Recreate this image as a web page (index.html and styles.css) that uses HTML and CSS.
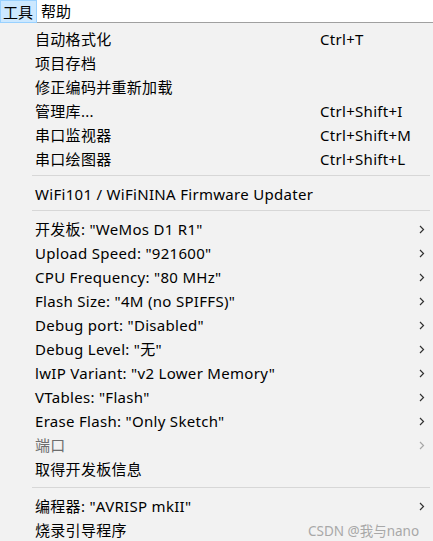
FILE: index.html
```html
<!DOCTYPE html>
<html lang="zh-CN">
<head>
<meta charset="utf-8">
<title>工具菜单</title>
<link rel="stylesheet" href="styles.css">
</head>
<body>
<div class="menubar">
  <span class="top-item active">工具</span>
  <span class="top-item">帮助</span>
</div>
<div class="menu">
  <div class="row"><span class="label">自动格式化</span><span class="key">Ctrl+T</span></div>
  <div class="row"><span class="label">项目存档</span></div>
  <div class="row"><span class="label">修正编码并重新加载</span></div>
  <div class="row"><span class="label">管理库...</span><span class="key">Ctrl+Shift+I</span></div>
  <div class="row"><span class="label">串口监视器</span><span class="key">Ctrl+Shift+M</span></div>
  <div class="row"><span class="label">串口绘图器</span><span class="key">Ctrl+Shift+L</span></div>
  <div class="sep"></div>
  <div class="row"><span class="label">WiFi101 / WiFiNINA Firmware Updater</span></div>
  <div class="sep"></div>
  <div class="row"><span class="label">开发板: "WeMos D1 R1"</span><span class="arrow"><svg width="6" height="9" viewBox="0 0 6 9"><path d="M1 1 L4.5 4.5 L1 8" fill="none" stroke="currentColor" stroke-width="1.2"/></svg></span></div>
  <div class="row"><span class="label">Upload Speed: "921600"</span><span class="arrow"><svg width="6" height="9" viewBox="0 0 6 9"><path d="M1 1 L4.5 4.5 L1 8" fill="none" stroke="currentColor" stroke-width="1.2"/></svg></span></div>
  <div class="row"><span class="label">CPU Frequency: "80 MHz"</span><span class="arrow"><svg width="6" height="9" viewBox="0 0 6 9"><path d="M1 1 L4.5 4.5 L1 8" fill="none" stroke="currentColor" stroke-width="1.2"/></svg></span></div>
  <div class="row"><span class="label">Flash Size: "4M (no SPIFFS)"</span><span class="arrow"><svg width="6" height="9" viewBox="0 0 6 9"><path d="M1 1 L4.5 4.5 L1 8" fill="none" stroke="currentColor" stroke-width="1.2"/></svg></span></div>
  <div class="row"><span class="label">Debug port: "Disabled"</span><span class="arrow"><svg width="6" height="9" viewBox="0 0 6 9"><path d="M1 1 L4.5 4.5 L1 8" fill="none" stroke="currentColor" stroke-width="1.2"/></svg></span></div>
  <div class="row"><span class="label">Debug Level: "无"</span><span class="arrow"><svg width="6" height="9" viewBox="0 0 6 9"><path d="M1 1 L4.5 4.5 L1 8" fill="none" stroke="currentColor" stroke-width="1.2"/></svg></span></div>
  <div class="row"><span class="label">lwIP Variant: "v2 Lower Memory"</span><span class="arrow"><svg width="6" height="9" viewBox="0 0 6 9"><path d="M1 1 L4.5 4.5 L1 8" fill="none" stroke="currentColor" stroke-width="1.2"/></svg></span></div>
  <div class="row"><span class="label">VTables: "Flash"</span><span class="arrow"><svg width="6" height="9" viewBox="0 0 6 9"><path d="M1 1 L4.5 4.5 L1 8" fill="none" stroke="currentColor" stroke-width="1.2"/></svg></span></div>
  <div class="row"><span class="label">Erase Flash: "Only Sketch"</span><span class="arrow"><svg width="6" height="9" viewBox="0 0 6 9"><path d="M1 1 L4.5 4.5 L1 8" fill="none" stroke="currentColor" stroke-width="1.2"/></svg></span></div>
  <div class="row disabled"><span class="label">端口</span><span class="arrow"><svg width="6" height="9" viewBox="0 0 6 9"><path d="M1 1 L4.5 4.5 L1 8" fill="none" stroke="currentColor" stroke-width="1.2"/></svg></span></div>
  <div class="row"><span class="label">取得开发板信息</span></div>
  <div class="sep sep-last"></div>
  <div class="row"><span class="label">编程器: "AVRISP mkII"</span><span class="arrow"><svg width="6" height="9" viewBox="0 0 6 9"><path d="M1 1 L4.5 4.5 L1 8" fill="none" stroke="currentColor" stroke-width="1.2"/></svg></span></div>
  <div class="row"><span class="label">烧录引导程序</span></div>
</div>
<div class="watermark">CSDN @我与nano</div>
</body>
</html>
```
FILE: styles.css
```css
html, body {
  margin: 0;
  padding: 0;
  background: #f2f2f2;
  overflow: hidden;
}
body {
  width: 433px;
  height: 541px;
  position: relative;
  font-family: "Noto Sans", "Noto Sans CJK SC", sans-serif;
  font-size: 15px;
  color: #000;
}
.menubar {
  height: 22px;
  background: #fff;
  border-bottom: 1px solid #a0a0a0;
  display: flex;
  align-items: stretch;
  position: relative;
  z-index: 1;
}
.top-item {
  display: flex;
  align-items: center;
  padding: 0 4px 0 3px;
  line-height: 22px;
  margin-right: 1px;
}
.top-item.active {
  background: #cce8ff;
  box-shadow: inset 0 0 0 1px #99d1ff;
  height: 23px;
  margin-bottom: -1px;
}
.menu {
  padding-top: 4px;
  background: #f2f2f2;
}
.row {
  display: grid;
  grid-template-columns: 35px 285px 1fr 14px;
  height: 24px;
  align-items: center;
  white-space: nowrap;
  letter-spacing: 0.3px;
}
.label {
  grid-column: 2;
  line-height: 24px;
}
.key {
  grid-column: 3;
  line-height: 24px;
}
.arrow {
  grid-column: 4;
  display: flex;
  align-items: center;
  color: #333;
}
.arrow svg {
  display: block;
}
.row.disabled .label {
  color: #6d6d6d;
}
.row.disabled .arrow {
  color: #a8a8a8;
}
.sep {
  height: 11px;
  display: flex;
  align-items: flex-start;
  margin-left: 32px;
  margin-right: 3px;
}
.sep::before {
  content: "";
  display: block;
  width: 100%;
  height: 1px;
  margin-top: 4px;
  background: #d7d7d7;
}
.sep-last {
  height: 13px;
}
.sep-last::before {
  margin-top: 6px;
}
.watermark {
  position: absolute;
  left: 308px;
  top: 520px;
  font-size: 13.5px;
  line-height: 22px;
  color: #a8a8a8;
  white-space: nowrap;
}
```
